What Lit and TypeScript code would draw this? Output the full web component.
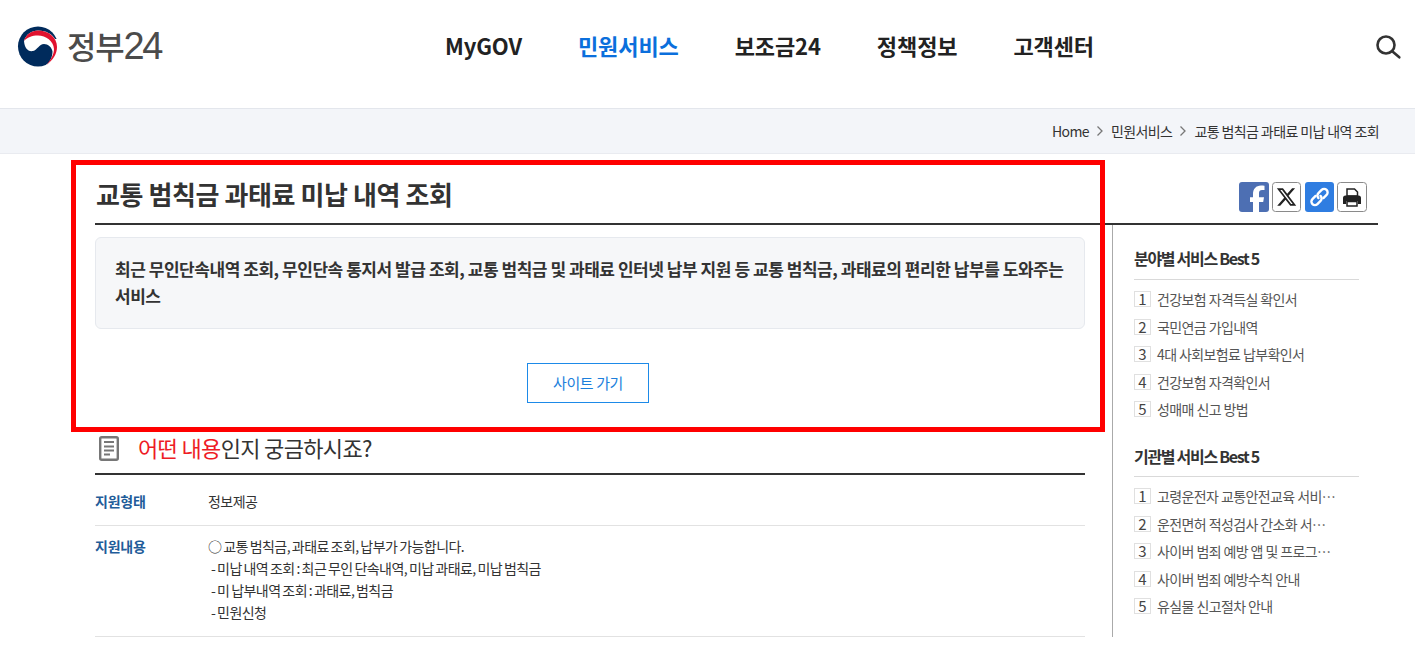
import { LitElement, html, css, svg } from "lit";
import { customElement } from "lit/decorators.js";

const best1 = ["건강보험 자격득실 확인서", "국민연금 가입내역", "4대 사회보험료 납부확인서", "건강보험 자격확인서", "성매매 신고 방법"];
const best2 = ["고령운전자 교통안전교육 서비…", "운전면허 적성검사 간소화 서…", "사이버 범죄 예방 앱 및 프로그…", "사이버 범죄 예방수칙 안내", "유실물 신고절차 안내"];

@customElement("app-root")
export class AppRoot extends LitElement {
  static styles = css`
    :host { display: block; position: relative; height: 646px; overflow: hidden; background: #fff; font-family: "Noto Sans CJK KR", "Noto Sans", sans-serif; color: #333; }
    * { box-sizing: border-box; }
    .top { height: 109px; border-bottom: 1px solid #e3e6ec; display: flex; align-items: flex-start; padding: 26px 13px 0 17px; }
    .logo { display: flex; align-items: center; gap: 8px; width: 428px; height: 41px; flex: none; }
    .logo-text { font-size: 32px; line-height: 39px; margin-top: -2px; font-weight: 500; color: #4b4b4b; letter-spacing: -1.2px; white-space: nowrap; }
    .logo-text i { font-style: normal; font-family: "Liberation Sans", sans-serif; font-weight: 400; font-size: 38px; letter-spacing: -2.4px; line-height: 39px; }
    .nav { display: flex; gap: 56px; font-size: 22px; font-weight: 700; line-height: 38px; letter-spacing: -0.1px; color: #222; flex: 1; }
    .nav .on { color: #0b6fdc; }
    .search { display: block; margin-top: 8px; flex: none; }
    .crumb { height: 45px; background: #f3f5f9; border-bottom: 1px solid #e9ebf0; display: flex; justify-content: flex-end; align-items: center; gap: 7px; padding-right: 36px; font-size: 14px; letter-spacing: -0.6px; color: #333; }
    .wrap { padding: 0 37px 0 95px; }
    .head { height: 71px; border-bottom: 2px solid #333; display: flex; justify-content: space-between; align-items: flex-start; }
    h1 { margin: 0; padding: 21px 0 0 1px; font-size: 26px; line-height: 38px; font-weight: 700; letter-spacing: -0.42px; color: #333; }
    .share { display: flex; gap: 3px; padding: 28px 11px 0 0; }
    .share svg { display: block; }
    .share .link { margin-left: 1px; }
    .cols { display: flex; }
    .main { width: 990px; flex: none; padding-top: 12px; }
    .summary { height: 92px; background: #f6f7f9; border: 1px solid #e6e9ee; border-radius: 6px; padding: 17px 15px 0 19px; font-size: 17px; font-weight: 700; line-height: 27px; letter-spacing: -0.46px; color: #333; }
    .btnrow { display: flex; justify-content: center; padding: 34px 4px 0 0; }
    .btn { width: 122px; height: 40px; padding-bottom: 2px; border: 1px solid #1d8ae8; color: #1d7fdc; font-size: 15px; display: flex; align-items: center; justify-content: center; letter-spacing: -0.4px; }
    .q { display: flex; align-items: center; height: 72px; padding: 20px 0 0 4px; border-bottom: 2px solid #333; font-size: 22px; letter-spacing: -0.65px; color: #333; }
    .q svg { margin-right: 19px; }
    .q span { margin-top: -2px; }
    .q em { font-style: normal; color: #ee1c25; }
    dl { margin: 0; }
    .row { display: flex; border-bottom: 1px solid #e2e2e2; font-size: 14px; letter-spacing: -0.55px; word-spacing: -0.8px; color: #333; }
    .row dt { width: 113px; font-weight: 700; color: #1f5c99; letter-spacing: -0.25px; }
    .row dd { margin: 0; }
    .r1 { height: 51px; padding-top: 15px; line-height: 22px; }
    .r2 { height: 111px; padding-top: 9px; line-height: 22px; }
    .r2 dd div { padding-left: 3px; }
    .r2 dd div:first-child { padding-left: 0; }
    .side { margin-left: 27px; border-left: 1px solid #aaa; padding-left: 21px; width: 266px; flex: none; }
    .side section { width: 225px; }
    h2 { margin: 0; font-size: 16px; font-weight: 700; letter-spacing: -1.3px; line-height: 24px; color: #333; border-bottom: 1px solid #d9d9d9; }
    .first h2 { height: 55px; padding-top: 21px; }
    .second { margin-top: 14px; }
    .second h2 { height: 40px; padding-top: 7px; }
    .side ul { list-style: none; margin: 0; padding: 5.5px 0 0; }
    .side li { display: flex; align-items: center; gap: 6px; height: 27.5px; font-size: 14px; letter-spacing: -0.6px; color: #555; white-space: nowrap; }
    .side li span { flex: none; width: 17px; height: 16px; border: 1px solid #e0e0e0; font-size: 15px; line-height: 14px; text-align: center; color: #444; letter-spacing: 0; }
    .side li b { font-weight: 400; display: block; }
    .highlight { position: absolute; left: 71px; top: 160px; width: 1034px; height: 272px; border: 5px solid #f00; pointer-events: none; }
  `;

  private chev() {
    return html`<svg width="8" height="12" viewBox="0 0 8 12" fill="none" stroke="#777" stroke-width="1.3"><path d="M1.5 1.5 6 6l-4.500 4.500"/></svg>`;
  }

  private list(items: string[]) {
    return html`<ul>${items.map((t, i) => html`<li><span>${i + 1}</span><b>${t}</b></li>`)}</ul>`;
  }

  render() {
    return html`
      <div class="top">
        <div class="logo">
          <svg width="42" height="42" viewBox="0 0 42 42">
            ${svg`<circle cx="21" cy="20.500" r="20" fill="#002b5c"/>
            <path d="M7 15C9 8 15 4.500 21 4.500 29 4.500 35 8 38 13h4v17L32 42l-3-3C33 36 35.500 31 35.500 25.500 35 21.500 31 18 27 18 22 18 20.500 24 16 25 11 26 7.500 22 7 15Z" fill="#fff"/>
            <path d="M7 15C9 8 15 4.500 21 4.500 31 4.500 40 11 40 21 40 28 36 34 29.500 39 34 34 37 28 37 23 36.500 15 29 9.500 21 9.500 15 9.500 10 11.500 7 15Z" fill="#e1122f"/>`}
          </svg>
          <span class="logo-text">정부<i>24</i></span>
        </div>
        <nav class="nav">
          <span>MyGOV</span><span class="on">민원서비스</span><span>보조금24</span><span>정책정보</span><span>고객센터</span>
        </nav>
        <svg class="search" width="26" height="26" viewBox="0 0 26 26" fill="none" stroke="#333" stroke-width="2.600"><circle cx="10" cy="11" r="8.500"/><path d="m16.500 17.500 6.800 5.800" stroke-linecap="round"/></svg>
      </div>
      <div class="crumb"><span>Home</span>${this.chev()}<span>민원서비스</span>${this.chev()}<span>교통 범칙금 과태료 미납 내역 조회</span></div>
      <div class="wrap">
        <div class="head">
          <h1>교통 범칙금 과태료 미납 내역 조회</h1>
          <div class="share">
            <svg width="30" height="30" viewBox="0 0 30 30"><rect width="30" height="30" rx="3" fill="#4d6fb3"/><path d="M14 30V20h-3v-4.700h3V12c0-5 3-8.500 8-8.500 1.500 0 3 .2 3.500.3V8H23c-2 0-3 1-3 3v4.300h5l-.8 4.700H20v10Z" fill="#fff"/></svg>
            <svg width="29" height="30" viewBox="0 0 29 30" fill="none"><rect x=".5" y=".5" width="28" height="29" rx="3" fill="#fff" stroke="#8a8a8a"/><path transform="translate(3.700 4.200) scale(.9)" fill="#222" d="M18.244 2.250h3.308l-7.227 8.260 8.502 11.240H16.170l-5.214-6.817L4.990 21.750H1.680l7.730-8.835L1.254 2.250H8.080l4.713 6.231zm-1.161 17.520h1.833L7.084 4.126H5.117z"/></svg>
            <svg class="link" width="29" height="30" viewBox="0 0 29 30" fill="none"><rect width="29" height="30" rx="3" fill="#2f7de1"/><g transform="rotate(-45 14.500 15)" stroke="#fff" stroke-width="2.400" stroke-linecap="round"><path d="M12.500 11.500H8a3.500 3.500 0 0 0 0 7h4.500a3.500 3.500 0 0 0 3.500-3.500"/><path d="M16.500 18.500H21a3.500 3.500 0 0 0 0-7h-4.500a3.500 3.500 0 0 0-3.500 3.500"/></g></svg>
            <svg width="30" height="30" viewBox="0 0 30 30"><rect x=".5" y=".5" width="29" height="29" rx="3" fill="#fff" stroke="#8a8a8a"/><path d="M10 7h7.500l3 3v4H10Z" fill="#fff" stroke="#222" stroke-width="1.500"/><path d="M6 16a2.500 2.500 0 0 1 2.500-2.500h13A2.500 2.500 0 0 1 24 16v6h-3v-3H9v3H6Z" fill="#222"/><path d="M10 19.500h10V24H10Z" fill="#fff" stroke="#222" stroke-width="1.500"/></svg>
          </div>
        </div>
        <div class="cols">
          <div class="main">
            <div class="summary">최근 무인단속내역 조회, 무인단속 통지서 발급 조회, 교통 범칙금 및 과태료 인터넷 납부 지원 등 교통 범칙금, 과태료의 편리한 납부를 도와주는 서비스</div>
            <div class="btnrow"><div class="btn">사이트 가기</div></div>
            <div class="q">
              <svg width="20" height="25" viewBox="0 0 20 25" fill="none"><rect x="1.200" y="1.200" width="17.600" height="22.600" rx="1.500" stroke="#777" stroke-width="2.400"/><path d="M5 6h10M5 10.500h10M5 14.500h10M5 18.500h6" stroke="#777" stroke-width="2"/></svg>
              <span><em>어떤 내용</em>인지 궁금하시죠?</span>
            </div>
            <dl>
              <div class="row r1"><dt>지원형태</dt><dd>정보제공</dd></div>
              <div class="row r2"><dt>지원내용</dt><dd><div>○ 교통 범칙금, 과태료 조회, 납부가 가능합니다.</div><div>- 미납 내역 조회 : 최근 무인 단속내역, 미납 과태료, 미납 범칙금</div><div>- 미 납부내역 조회 : 과태료, 범칙금</div><div>- 민원신청</div></dd></div>
            </dl>
          </div>
          <aside class="side">
            <section class="first"><h2>분야별 서비스 Best 5</h2>${this.list(best1)}</section>
            <section class="second"><h2>기관별 서비스 Best 5</h2>${this.list(best2)}</section>
          </aside>
        </div>
      </div>
      <div class="highlight"></div>
    `;
  }
}
